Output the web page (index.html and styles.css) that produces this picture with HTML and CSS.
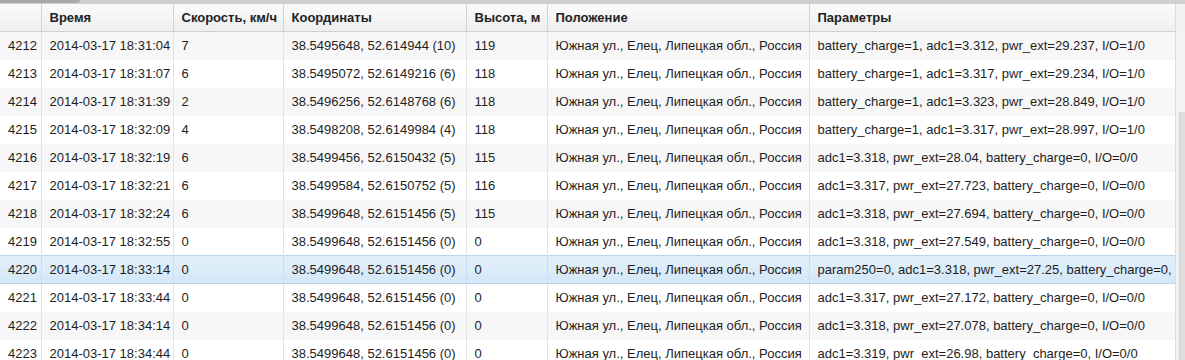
FILE: index.html
```html
<!DOCTYPE html>
<html lang="ru">
<head>
<meta charset="utf-8">
<title>Сообщения</title>
<link rel="stylesheet" href="styles.css">
</head>
<body>
<div class="band"><div class="tab"></div></div>
<div class="grid">
  <div class="viewport">
    <table class="data">
      <colgroup>
        <col class="c-num"><col class="c-time"><col class="c-speed"><col class="c-coord"><col class="c-alt"><col class="c-pos"><col class="c-par">
      </colgroup>
      <thead>
        <tr><th></th><th>Время</th><th>Скорость, км/ч</th><th>Координаты</th><th>Высота, м</th><th>Положение</th><th>Параметры</th></tr>
      </thead>
      <tbody>
        <tr class="odd"><td>4212</td><td>2014-03-17 18:31:04</td><td>7</td><td>38.5495648, 52.614944 (10)</td><td>119</td><td>Южная ул., Елец, Липецкая обл., Россия</td><td>battery_charge=1, adc1=3.312, pwr_ext=29.237, I/O=1/0</td></tr>
        <tr><td>4213</td><td>2014-03-17 18:31:07</td><td>6</td><td>38.5495072, 52.6149216 (6)</td><td>118</td><td>Южная ул., Елец, Липецкая обл., Россия</td><td>battery_charge=1, adc1=3.317, pwr_ext=29.234, I/O=1/0</td></tr>
        <tr class="odd"><td>4214</td><td>2014-03-17 18:31:39</td><td>2</td><td>38.5496256, 52.6148768 (6)</td><td>118</td><td>Южная ул., Елец, Липецкая обл., Россия</td><td>battery_charge=1, adc1=3.323, pwr_ext=28.849, I/O=1/0</td></tr>
        <tr><td>4215</td><td>2014-03-17 18:32:09</td><td>4</td><td>38.5498208, 52.6149984 (4)</td><td>118</td><td>Южная ул., Елец, Липецкая обл., Россия</td><td>battery_charge=1, adc1=3.317, pwr_ext=28.997, I/O=1/0</td></tr>
        <tr class="odd"><td>4216</td><td>2014-03-17 18:32:19</td><td>6</td><td>38.5499456, 52.6150432 (5)</td><td>115</td><td>Южная ул., Елец, Липецкая обл., Россия</td><td>adc1=3.318, pwr_ext=28.04, battery_charge=0, I/O=0/0</td></tr>
        <tr><td>4217</td><td>2014-03-17 18:32:21</td><td>6</td><td>38.5499584, 52.6150752 (5)</td><td>116</td><td>Южная ул., Елец, Липецкая обл., Россия</td><td>adc1=3.317, pwr_ext=27.723, battery_charge=0, I/O=0/0</td></tr>
        <tr class="odd"><td>4218</td><td>2014-03-17 18:32:24</td><td>6</td><td>38.5499648, 52.6151456 (5)</td><td>115</td><td>Южная ул., Елец, Липецкая обл., Россия</td><td>adc1=3.318, pwr_ext=27.694, battery_charge=0, I/O=0/0</td></tr>
        <tr><td>4219</td><td>2014-03-17 18:32:55</td><td>0</td><td>38.5499648, 52.6151456 (0)</td><td>0</td><td>Южная ул., Елец, Липецкая обл., Россия</td><td>adc1=3.318, pwr_ext=27.549, battery_charge=0, I/O=0/0</td></tr>
        <tr class="selected"><td>4220</td><td>2014-03-17 18:33:14</td><td>0</td><td>38.5499648, 52.6151456 (0)</td><td>0</td><td>Южная ул., Елец, Липецкая обл., Россия</td><td>param250=0, adc1=3.318, pwr_ext=27.25, battery_charge=0, I/O=0/0</td></tr>
        <tr><td>4221</td><td>2014-03-17 18:33:44</td><td>0</td><td>38.5499648, 52.6151456 (0)</td><td>0</td><td>Южная ул., Елец, Липецкая обл., Россия</td><td>adc1=3.317, pwr_ext=27.172, battery_charge=0, I/O=0/0</td></tr>
        <tr class="odd"><td>4222</td><td>2014-03-17 18:34:14</td><td>0</td><td>38.5499648, 52.6151456 (0)</td><td>0</td><td>Южная ул., Елец, Липецкая обл., Россия</td><td>adc1=3.318, pwr_ext=27.078, battery_charge=0, I/O=0/0</td></tr>
        <tr><td>4223</td><td>2014-03-17 18:34:44</td><td>0</td><td>38.5499648, 52.6151456 (0)</td><td>0</td><td>Южная ул., Елец, Липецкая обл., Россия</td><td>adc1=3.319, pwr_ext=26.98, battery_charge=0, I/O=0/0</td></tr>
      </tbody>
    </table>
  </div>
  <div class="scrollbar">
    <div class="sb-head"></div>
    <div class="sb-track"><div class="sb-thumb"></div></div>
  </div>
</div>
</body>
</html>
```
FILE: styles.css
```css
html, body {
  margin: 0;
  padding: 0;
  height: 360px;
  overflow: hidden;
  background: #fff;
  font-family: "Liberation Sans", Arial, sans-serif;
  font-size: 13px;
  color: #1e1e1e;
}
.band {
  height: 4px;
  background: #cfcfcf;
  position: relative;
}
.tab {
  position: absolute;
  left: 0;
  top: 0;
  width: 80px;
  height: 3px;
  background: #a9a9a9;
  border-bottom-right-radius: 4px;
}
.grid {
  display: flex;
  height: 356px;
}
.viewport {
  width: 1176px;
  overflow: hidden;
}
.data {
  table-layout: fixed;
  border-collapse: collapse;
  width: 1176px;
}
.c-num { width: 41px; }
.c-time { width: 132px; }
.c-speed { width: 110px; }
.c-coord { width: 183px; }
.c-alt { width: 81px; }
.c-pos { width: 262px; }
.c-par { width: 367px; }
.data th {
  height: 27px;
  padding: 0 8px;
  text-align: left;
  font-weight: bold;
  color: #222;
  background: linear-gradient(#fbfbfb, #eeeeee);
  border-right: 1px solid #d3d3d3;
  border-bottom: 1px solid #d0d0d0;
  white-space: nowrap;
  overflow: hidden;
}
.data th:last-child { border-right: none; }
.data td {
  height: 28px;
  padding: 0 8px;
  white-space: nowrap;
  overflow: hidden;
  border-right: 1px solid #e3e3e3;
  box-sizing: border-box;
}
.data td:last-child { border-right: none; }
.data tr.odd td { background: #f7f7f7; }
.data tr.selected td {
  background: linear-gradient(#e3f0fb, #d3e7f7);
  border-top: 1px solid #b5d5f0;
  border-bottom: 1px solid #b5d5f0;
  border-right-color: #c9dff1;
}
.scrollbar {
  width: 9px;
  border-left: 1px solid #dcdcdc;
  display: flex;
  flex-direction: column;
  background: #f4f4f4;
}
.sb-head {
  height: 28px;
  background: #f2f2f2;
}
.sb-track {
  flex: 1;
  display: flex;
  flex-direction: column;
  padding-top: 80px;
  padding-left: 3px;
}
.sb-thumb {
  flex: 1;
  background: #dedede;
  border-left: 1px solid #d0d0d0;
}
```
